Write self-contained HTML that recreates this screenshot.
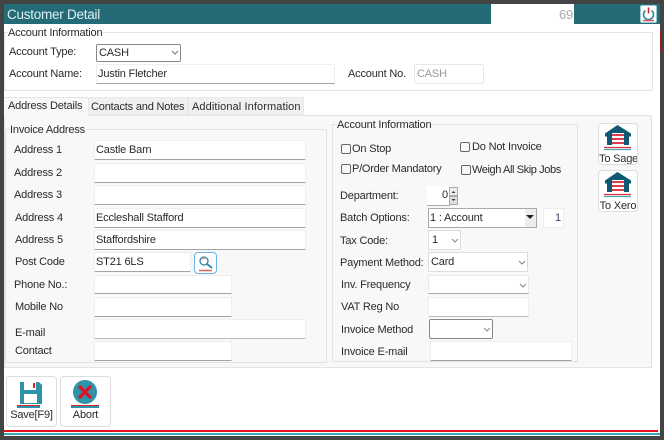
<!DOCTYPE html>
<html><head><meta charset="utf-8"><style>
html,body{margin:0;padding:0}
body{width:664px;height:440px;overflow:hidden;background:#444;position:relative;font-family:"Liberation Sans",sans-serif;font-size:11px;letter-spacing:-.18px;color:#2a2a2a}
div,span{position:absolute;box-sizing:border-box;white-space:nowrap}
.l{line-height:14px;height:14px}
.i{background:#fff;border:1px solid #efefef;border-bottom:1px solid #a4a4a4;line-height:18px;padding-left:1px;color:#2a2a2a}
.s{background:#fff;border:1px solid #e8e8e8;border-bottom:1px solid #aaa;line-height:18px;padding-left:3px}
.sb{border:1px solid #888;border-radius:2px;background:#fff;line-height:17px;padding-left:2px}
.c{width:10px;height:10px;border:1px solid #666;border-radius:2px;background:#f8f8f8}
svg{position:absolute;display:block}
.btn{background:#fff;border:1px solid #ddd;border-radius:4px}
.ctr{text-align:center;left:0;right:0}
</style></head><body>
<div style="left:4px;top:4px;width:656px;height:432px;background:#fff"></div>
<div style="left:4px;top:4px;width:487px;height:20px;background:#226b77"></div>
<div style="left:574px;top:4px;width:86px;height:20px;background:#226b77"></div>
<div style="left:7px;top:6px;font-size:13.5px;letter-spacing:-.25px;line-height:17px;color:#dff0f2">Customer Detail</div>
<div style="left:559px;top:8px;font-size:13px;line-height:14px;color:#aaa">69</div>
<div style="left:640px;top:5px;width:17px;height:18px;background:#fff;border:1px solid #9cc;border-radius:2px"></div>
<svg style="left:640px;top:5px" width="17" height="18" viewBox="0 0 17 18"><path d="M5.500 5.500a5 5 0 1 0 6 0" fill="none" stroke="#2a8ba0" stroke-width="1.600"/><path d="M8.500 2.500v6" stroke="#e0202a" stroke-width="1.600"/><path d="M3 15.500h11" stroke="#e0505a" stroke-width="1.500"/></svg>

<div style="left:4px;top:32px;width:649px;height:59px;background:#fff;border:1px solid #e4e4e4"></div>
<div class="l" style="left:8px;top:26px;background:#fff;padding-right:1px">Account Information</div>
<div class="l" style="left:9px;top:45px">Account Type:</div>
<div class="sb" style="left:96px;top:44px;width:85px;height:18px;padding-left:2px">CASH</div>
<svg style="left:171px;top:50px" width="8" height="5"><path d="M1 1l3 3 3-3" fill="none" stroke="#777"/></svg>
<div class="l" style="left:9px;top:67px">Account Name:</div>
<div class="i" style="left:96px;top:64px;width:239px;height:20px;padding-left:1px">Justin Fletcher</div>
<div class="l" style="left:348px;top:67px">Account No.</div>
<div style="left:414px;top:64px;width:70px;height:20px;border:1px solid #e8e8e8;border-radius:2px;line-height:18px;padding-left:2px;color:#999">CASH</div>

<div style="left:4px;top:115px;width:648px;height:253px;background:#f8f8f8;border:1px solid #e4e4e4"></div>
<div style="left:4px;top:97px;width:84px;height:19px;background:#f8f8f8;border-top:1px solid #e4e4e4"></div>
<div class="l" style="left:8px;top:99px">Address Details</div>
<div style="left:88px;top:97px;width:100px;height:18px;background:#f0f0f0;border:1px solid #e8e8e8"></div>
<div class="l" style="left:91px;top:100px">Contacts and Notes</div>
<div style="left:188px;top:97px;width:116px;height:18px;background:#f0f0f0;border:1px solid #e8e8e8"></div>
<div class="l" style="left:192px;top:100px;letter-spacing:.1px">Additional Information</div>

<div style="left:5px;top:129px;width:322px;height:234px;border:1px solid #e2e2e2"></div>
<div class="l" style="left:10px;top:123px;background:#f8f8f8;padding-right:1px">Invoice Address</div>
<div class="l" style="left:14px;top:143px">Address 1</div>
<div class="i" style="left:94px;top:140px;width:212px;height:20px">Castle Barn</div>
<div class="l" style="left:14px;top:166px">Address 2</div>
<div class="i" style="left:94px;top:163px;width:212px;height:20px"></div>
<div class="l" style="left:14px;top:188px">Address 3</div>
<div class="i" style="left:94px;top:185px;width:212px;height:20px"></div>
<div class="l" style="left:15px;top:211px">Address 4</div>
<div class="i" style="left:94px;top:208px;width:212px;height:20px">Eccleshall Stafford</div>
<div class="l" style="left:15px;top:233px">Address 5</div>
<div class="i" style="left:94px;top:230px;width:212px;height:20px">Staffordshire</div>
<div class="l" style="left:15px;top:255px">Post Code</div>
<div class="i" style="left:94px;top:252px;width:97px;height:20px">ST21 6LS</div>
<div style="left:194px;top:252px;width:23px;height:22px;background:#fff;border:1px solid #69b2e6;border-radius:4px"></div>
<svg style="left:194px;top:252px" width="23" height="22"><circle cx="10" cy="9" r="4" fill="#fff" stroke="#2a8ba0" stroke-width="1.300"/><path d="M7.500 7.500a3 3 0 0 1 4-.5" stroke="#e88" fill="none"/><path d="M13 12l5 4" stroke="#2a8ba0" stroke-width="1.800"/><path d="M5 18.500h13" stroke="#e0605a" stroke-width="1.500"/></svg>
<div class="l" style="left:14px;top:278px">Phone No.:</div>
<div class="i" style="left:94px;top:275px;width:138px;height:19px"></div>
<div class="l" style="left:15px;top:300px">Mobile No</div>
<div class="i" style="left:94px;top:297px;width:138px;height:20px"></div>
<div class="l" style="left:15px;top:326px">E-mail</div>
<div class="i" style="left:94px;top:319px;width:212px;height:20px;border-bottom-color:#bbb"></div>
<div class="l" style="left:15px;top:344px">Contact</div>
<div class="i" style="left:94px;top:341px;width:138px;height:20px"></div>

<div style="left:332px;top:124px;width:246px;height:238px;border:1px solid #e2e2e2"></div>
<div class="l" style="left:337px;top:118px;background:#f8f8f8;padding-right:1px">Account Information</div>
<div class="c" style="left:341px;top:144px"></div><div class="l" style="left:352px;top:142px">On Stop</div>
<div class="c" style="left:460px;top:142px"></div><div class="l" style="left:472px;top:140px">Do Not Invoice</div>
<div class="c" style="left:341px;top:164px"></div><div class="l" style="left:352px;top:162px;letter-spacing:-.24px">P/Order Mandatory</div>
<div class="c" style="left:461px;top:165px"></div><div class="l" style="left:472px;top:163px;letter-spacing:-.4px">Weigh All Skip Jobs</div>
<div class="l" style="left:340px;top:189px">Department:</div>
<div style="left:427px;top:186px;width:23px;height:20px;background:#fff;border-bottom:1px solid #aaa;line-height:19px;text-align:right;padding-right:2px">0</div>
<div style="left:449px;top:187px;width:9px;height:9px;background:#eee;border:1px solid #aaa"></div>
<div style="left:449px;top:196px;width:9px;height:9px;background:#ddd;border:1px solid #aaa"></div>
<svg style="left:449px;top:187px" width="9" height="18"><path d="M2.500 6l2-2 2 2z M2.500 12l2 2 2-2z" fill="#333"/></svg>
<div class="l" style="left:340px;top:211px">Batch Options:</div>
<div style="left:428px;top:208px;width:109px;height:20px;background:#fff;border:1px solid #aaa;line-height:18px;padding-left:1px">1 : Account</div>
<div style="left:525px;top:209px;width:11px;height:18px;background:#eee"></div>
<svg style="left:526px;top:215px" width="9" height="6"><path d="M0 0h8l-4 4z" fill="#222"/></svg>
<div style="left:543px;top:208px;width:21px;height:20px;background:#fff;border:1px solid #eee;line-height:18px;text-align:right;padding-right:2px;color:#503a6a">1</div>
<div class="l" style="left:340px;top:234px">Tax Code:</div>
<div class="s" style="left:428px;top:230px;width:33px;height:20px;padding-left:3px;border-color:#ddd">1</div>
<svg style="left:451px;top:238px" width="8" height="5"><path d="M1 1l3 3 3-3" fill="none" stroke="#888"/></svg>
<div class="l" style="left:340px;top:256px">Payment Method:</div>
<div class="s" style="left:428px;top:252px;width:100px;height:20px;padding-left:2px;border-color:#ddd">Card</div>
<svg style="left:518px;top:260px" width="8" height="5"><path d="M1 1l3 3 3-3" fill="none" stroke="#888"/></svg>
<div class="l" style="left:341px;top:278px">Inv. Frequency</div>
<div class="s" style="left:428px;top:275px;width:101px;height:19px"></div>
<svg style="left:519px;top:283px" width="8" height="5"><path d="M1 1l3 3 3-3" fill="none" stroke="#888"/></svg>
<div class="l" style="left:341px;top:300px">VAT Reg No</div>
<div class="i" style="left:428px;top:297px;width:101px;height:20px;border-bottom-color:#bbb"></div>
<div class="l" style="left:341px;top:323px">Invoice Method</div>
<div style="left:429px;top:319px;width:64px;height:20px;background:#fff;border:1px solid #888;border-radius:2px"></div>
<svg style="left:483px;top:327px" width="8" height="5"><path d="M1 1l3 3 3-3" fill="none" stroke="#888"/></svg>
<div class="l" style="left:341px;top:345px">Invoice E-mail</div>
<div class="i" style="left:430px;top:341px;width:142px;height:20px"></div>

<div class="btn" style="left:598px;top:123px;width:40px;height:42px;overflow:hidden">
<svg style="left:0;top:0" width="38" height="30"><path d="M18.500 1L32 9.500v3h-2V21H8v-8.500H6v-3z" fill="#0e5a72"/><rect x="13" y="9" width="12" height="12" fill="#fff"/><path d="M13 11h12M13 15h12M13 19h12" stroke="#d84050" stroke-width="2"/><path d="M5 23.500h27" stroke="#e03040" stroke-width="1.200"/><path d="M5 25.500h27" stroke="#4aa5b5" stroke-width="1.200"/></svg>
<div class="ctr l" style="top:28px">To Sage</div></div>
<div class="btn" style="left:598px;top:170px;width:40px;height:42px;overflow:hidden">
<svg style="left:0;top:0" width="38" height="30"><path d="M18.500 1L32 9.500v3h-2V21H8v-8.500H6v-3z" fill="#0e5a72"/><rect x="13" y="9" width="12" height="12" fill="#fff"/><path d="M13 11h12M13 15h12M13 19h12" stroke="#d84050" stroke-width="2"/><path d="M5 23.500h27" stroke="#e03040" stroke-width="1.200"/><path d="M5 25.500h27" stroke="#4aa5b5" stroke-width="1.200"/></svg>
<div class="ctr l" style="top:28px">To Xero</div></div>

<div class="btn" style="left:6px;top:376px;width:51px;height:51px;overflow:hidden">
<svg style="left:0;top:0" width="49" height="32"><path d="M13 5h19l3 3v19H13z" fill="#2c93a8"/><rect x="17" y="5" width="12" height="8" fill="#fff"/><rect x="26" y="6" width="2" height="5" fill="#e02030"/><rect x="17" y="17" width="13" height="9" fill="#fff"/><path d="M10 28.500h23" stroke="#e02030" stroke-width="1"/></svg>
<div style="left:10px;top:29px;width:23px;height:2px;background:#2c93a8"></div>
<div class="ctr l" style="top:31px">Save[F9]</div></div>
<div class="btn" style="left:60px;top:376px;width:51px;height:51px;overflow:hidden">
<svg style="left:0;top:0" width="49" height="32"><circle cx="24" cy="15" r="12" fill="#2c93a8"/><path d="M18 9l12 12M30 9L18 21" stroke="#e0102a" stroke-width="3.200"/></svg>
<div style="left:10px;top:28px;width:28px;height:1px;background:#e02030"></div>
<div style="left:10px;top:29px;width:28px;height:2px;background:#2c93a8"></div>
<div class="ctr l" style="top:31px">Abort</div></div>

<div style="left:4px;top:430px;width:654px;height:2px;background:#e5101e"></div>
<div style="left:4px;top:433px;width:656px;height:2px;background:#35a5b8"></div>
<div style="left:660px;top:30px;width:1px;height:22px;background:#8b1a1a"></div>
</body></html>
